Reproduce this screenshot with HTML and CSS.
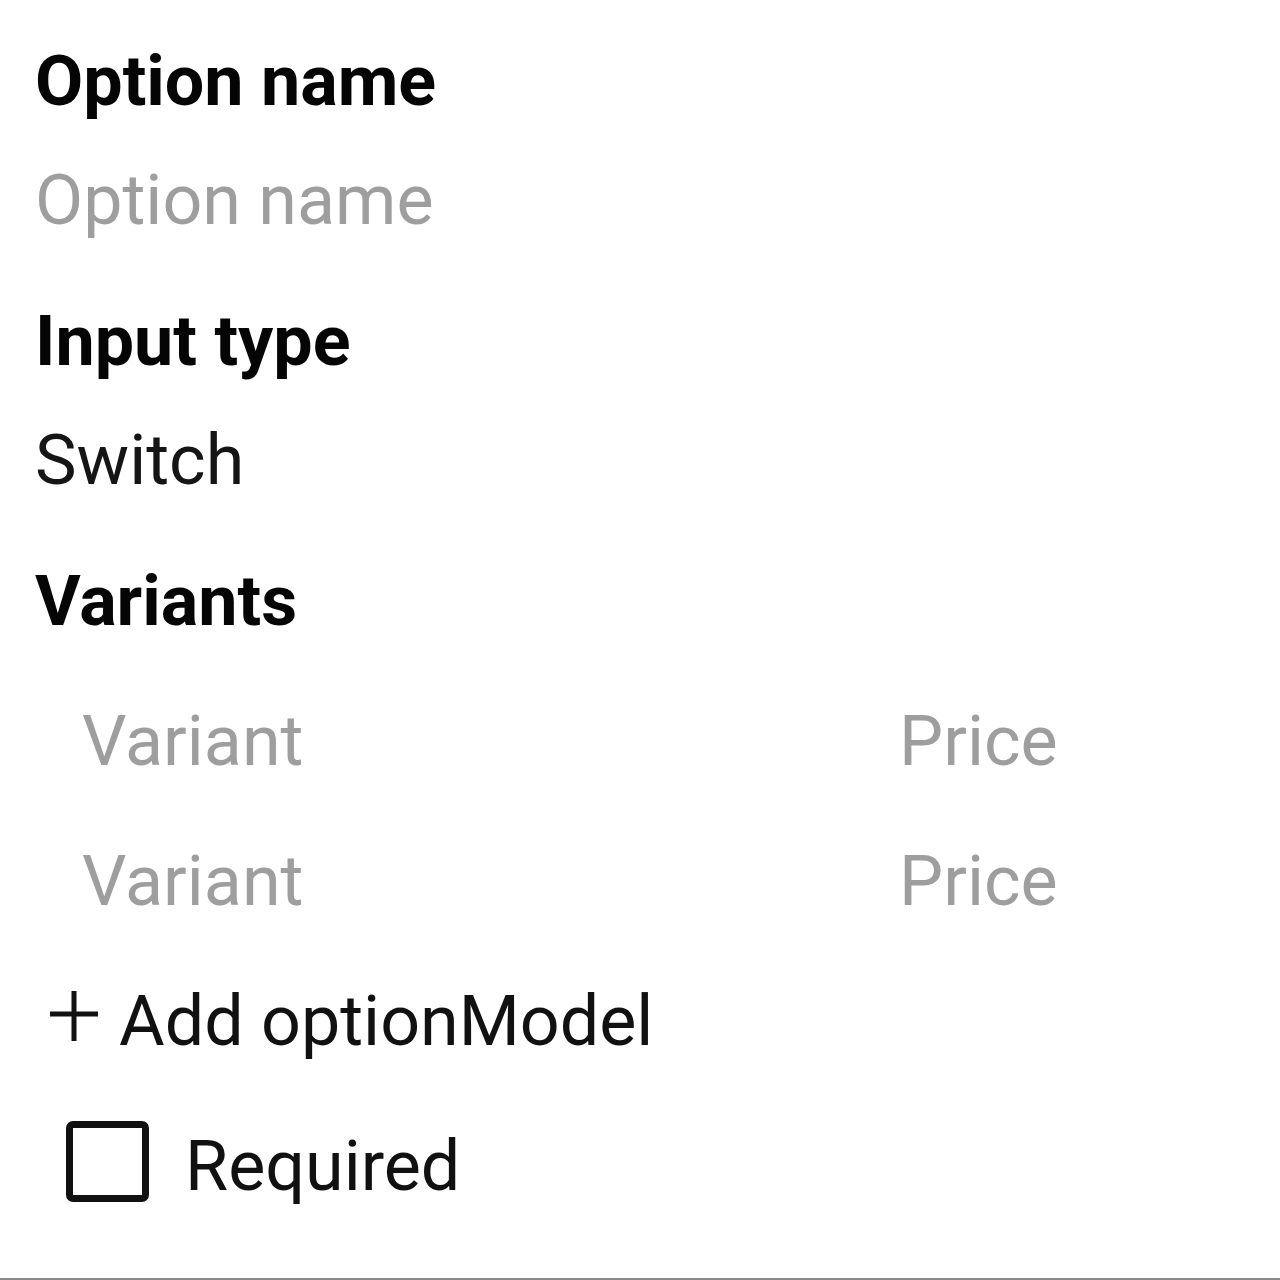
FILE: index.html
```html
<!DOCTYPE html>
<html>
<head>
<meta charset="utf-8">
<link rel="stylesheet" href="styles.css">
</head>
<body>
<main class="form">
  <section class="field">
    <div class="label">Option name</div>
    <div class="value placeholder">Option name</div>
  </section>
  <section class="field">
    <div class="label">Input type</div>
    <div class="value">Switch</div>
  </section>
  <section class="variants">
    <div class="label">Variants</div>
    <div class="variant-list">
      <div class="variant-row">
        <span class="placeholder">Variant</span>
        <span class="placeholder">Price</span>
      </div>
      <div class="variant-row">
        <span class="placeholder">Variant</span>
        <span class="placeholder">Price</span>
      </div>
    </div>
    <div class="add-row">
      <svg class="plus" width="48" height="50" viewBox="0 0 48 50"><path d="M24 0V50M0 23H48" stroke="#111" stroke-width="5" fill="none"/></svg>
      <span>Add optionModel</span>
    </div>
    <label class="check-row">
      <span class="checkbox"></span>
      <span>Required</span>
    </label>
  </section>
</main>
<div class="bottom-line"></div>
</body>
</html>
```

FILE: styles.css
```css
html, body {
  margin: 0;
  padding: 0;
  background: #fff;
}
body {
  width: 1280px;
  height: 1280px;
  position: relative;
  font-family: Roboto, "Noto Sans", sans-serif;
  color: #111;
  overflow: hidden;
}
.form {
  padding: 22px 0 0 35px;
}
.field {
  margin-bottom: 22px;
}
.label {
  font-size: 70px;
  font-weight: 700;
  line-height: 118px;
  color: #050505;
}
.value {
  font-size: 70px;
  line-height: 120px;
  color: #151515;
}
.placeholder {
  color: #9e9e9e;
}
.variant-list {
  margin-top: 11px;
  padding-left: 47px;
}
.variant-row {
  display: grid;
  grid-template-columns: 817px 1fr;
  font-size: 70px;
  line-height: 140px;
}
.add-row {
  display: flex;
  align-items: center;
  height: 140px;
  padding-left: 15px;
  font-size: 70px;
  color: #111;
}
.add-row .plus {
  margin: -10px 21px 0 0;
  flex: none;
}
.check-row {
  display: flex;
  align-items: center;
  height: 150px;
  padding-left: 31px;
  font-size: 70px;
  color: #111;
}
.checkbox {
  box-sizing: border-box;
  width: 83px;
  height: 81px;
  border: 7px solid #111;
  border-radius: 7px;
  margin: -10px 36px 0 0;
  flex: none;
}
.bottom-line {
  position: absolute;
  left: 0;
  right: 0;
  bottom: 0;
  height: 2px;
  background: #8a8a8a;
}
```
